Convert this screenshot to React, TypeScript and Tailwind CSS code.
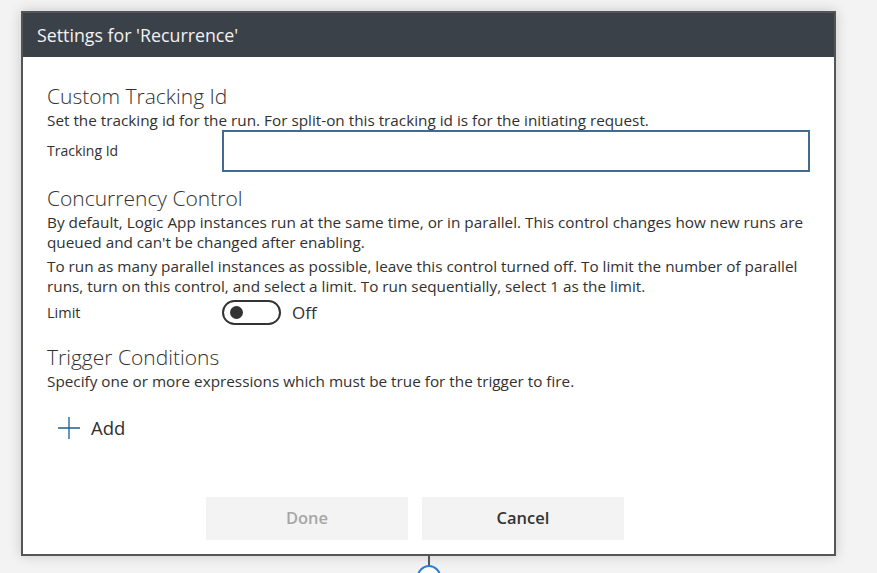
import React from 'react';

const Section = ({ title, children }: { title: string; children: React.ReactNode }) => (
  <div className="flex flex-col">
    <h2 className="text-[21px] leading-[28px] font-light text-[#323130]">{title}</h2>
    {children}
  </div>
);

export default function App() {
  return (
    <div
      className="w-[877px] h-[573px] bg-[#f3f3f3] overflow-hidden relative"
      style={{ fontFamily: '"Open Sans", "Noto Sans", sans-serif' }}
    >
      <div className="ml-[21px] mt-[11px] w-[815px] h-[545px] border-2 border-[#555555] bg-white flex flex-col shadow-[0_0_12px_rgba(0,0,0,0.18)] relative">
        <div className="h-[44px] bg-[#3b4149] flex items-center px-[14px] shrink-0">
          <span className="text-[17.8px] text-[#f2f2f2]">Settings for 'Recurrence'</span>
        </div>

        <div className="flex flex-col px-[24px] pt-[25px] text-[15.3px] leading-[20px] text-[#323130]">
          <Section title="Custom Tracking Id">
            <p>Set the tracking id for the run. For split-on this tracking id is for the initiating request.</p>
            <div className="flex items-center">
              <span className="w-[175px] shrink-0 text-[14px]">Tracking Id</span>
              <input className="w-[588px] h-[42px] border-2 border-[#426b8f] outline-none px-2" />
            </div>
          </Section>

          <div className="mt-[12px]">
            <Section title="Concurrency Control">
              <p>
                By default, Logic App instances run at the same time, or in parallel. This control changes how new runs
                are queued and can't be changed after enabling.
              </p>
              <p className="mt-[4px]">
                To run as many parallel instances as possible, leave this control turned off. To limit the number of
                parallel runs, turn on this control, and select a limit. To run sequentially, select 1 as the limit.
              </p>
              <div className="flex items-center mt-[4px]">
                <span className="w-[175px] shrink-0 text-[14.5px]">Limit</span>
                <div className="w-[59px] h-[25px] rounded-full border-2 border-[#333333] flex items-center pl-[6px]">
                  <div className="w-[13px] h-[13px] rounded-full bg-[#333333]" />
                </div>
                <span className="ml-[11px] text-[17px]">Off</span>
              </div>
            </Section>
          </div>

          <div className="mt-[18px]">
            <Section title="Trigger Conditions">
              <p>Specify one or more expressions which must be true for the trigger to fire.</p>
              <button className="flex items-center gap-[10px] mt-[25px] ml-[10px] text-[18.5px] text-[#323130]">
                <svg width="24" height="24" viewBox="0 0 24 24" fill="none">
                  <path d="M12 1v22M1 12h22" stroke="#1e5f8e" strokeWidth="1.3" />
                </svg>
                Add
              </button>
            </Section>
          </div>
        </div>

        <div className="mt-auto mb-[14px] flex gap-[14px] pl-[183px]">
          <button className="w-[202px] h-[43px] bg-[#f3f3f3] text-[16.5px] font-semibold text-[#a6a6a6]">Done</button>
          <button className="w-[202px] h-[43px] bg-[#f3f3f3] text-[16.5px] font-semibold text-[#333333]">Cancel</button>
        </div>
      </div>

      <div className="absolute left-[428px] top-[556px] w-[2px] h-[10px] bg-[#555555]" />
      <div className="absolute left-[417px] top-[565px] w-[24px] h-[24px] rounded-full border-2 border-[#2f7bd1] bg-white" />
    </div>
  );
}
